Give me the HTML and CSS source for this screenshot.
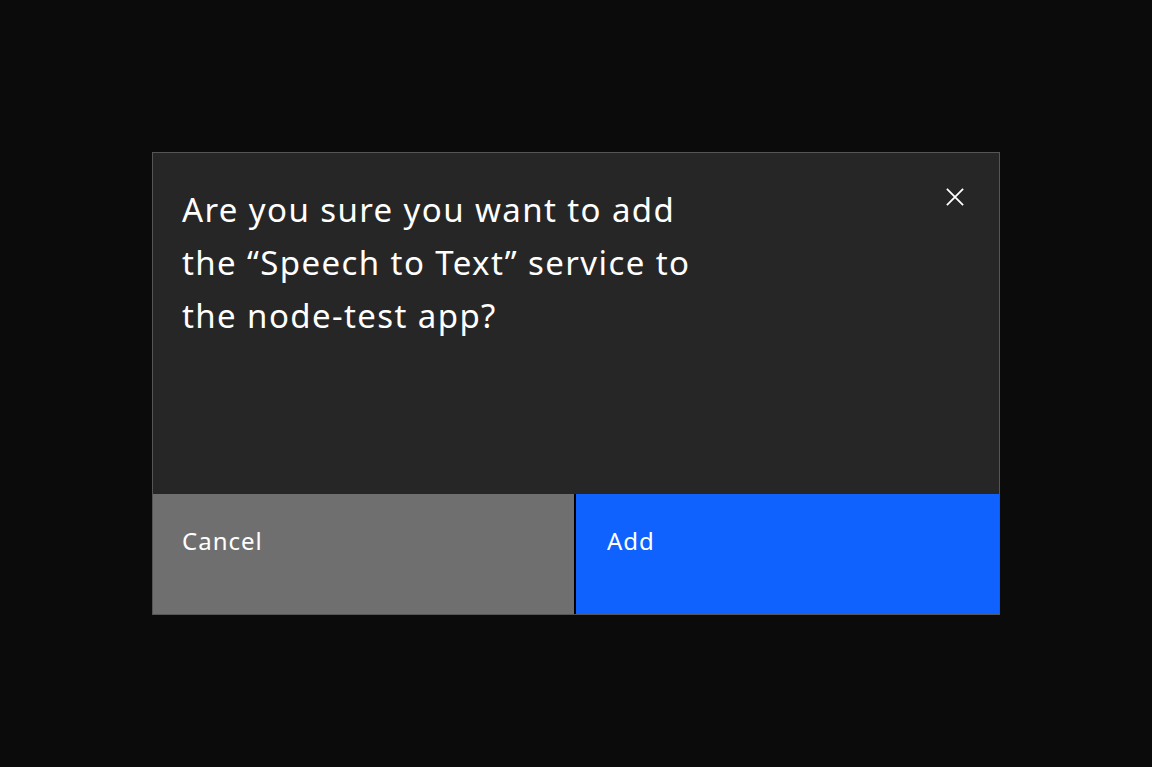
FILE: index.html
```html
<!DOCTYPE html>
<html lang="en">
<head>
  <meta charset="UTF-8" />
  <title>Add service</title>
  <link rel="stylesheet" href="styles.css">
</head>
<body>

<div class="modal" role="dialog" aria-labelledby="modalTitle">
  <div class="modal-body">
    <h1 id="modalTitle">Are you sure you want to add<br>the “Speech to Text” service to<br>the node-test app?</h1>
    <button class="close" aria-label="Close">
      <svg width="20" height="20" viewBox="0 0 20 20" fill="none" stroke="#fff" stroke-width="2">
        <path d="M1 1 L19 19 M19 1 L1 19" />
      </svg>
    </button>
  </div>
  <div class="modal-footer">
    <button class="btn btn-secondary">Cancel</button>
    <button class="btn btn-primary">Add</button>
  </div>
</div>

</body>
</html>
```

FILE: styles.css
```css
* {
  margin: 0; padding: 0; box-sizing: border-box;
}
body {
  font-family: 'Noto Sans', 'Open Sans', sans-serif;
  background: #0b0b0b;
  color: #fff;
  min-height: 100vh;
  display: flex;
  align-items: center;
  justify-content: center;
}

.modal {
  width: 848px;
  height: 463px;
  background: #262626;
  border: 1px solid #555;
  display: flex;
  flex-direction: column;
}
.modal-body {
  flex: 1;
  display: flex;
  justify-content: space-between;
  padding: 30px 33px 0 29px;
}
h1 {
  font-size: 33px;
  font-weight: 400;
  line-height: 53px;
  letter-spacing: 1.4px;
}
.close {
  background: none;
  border: none;
  cursor: pointer;
  width: 20px;
  height: 20px;
  margin-top: 4px;
}
.close svg {
  display: block;
  width: 18px;
  height: 18px;
}

.modal-footer {
  display: flex;
  height: 120px;
  gap: 2px;
  background: #000;
}
.btn {
  flex: 1;
  border: none;
  color: #fff;
  font-family: inherit;
  font-size: 24px;
  letter-spacing: 1px;
  text-align: left;
  display: flex;
  align-items: flex-start;
  padding: 30px 29px;
  cursor: pointer;
}
.btn-secondary {
  background: #6f6f6f;
}
.btn-primary {
  background: #0f62fe;
  padding-left: 31px;
}
```
